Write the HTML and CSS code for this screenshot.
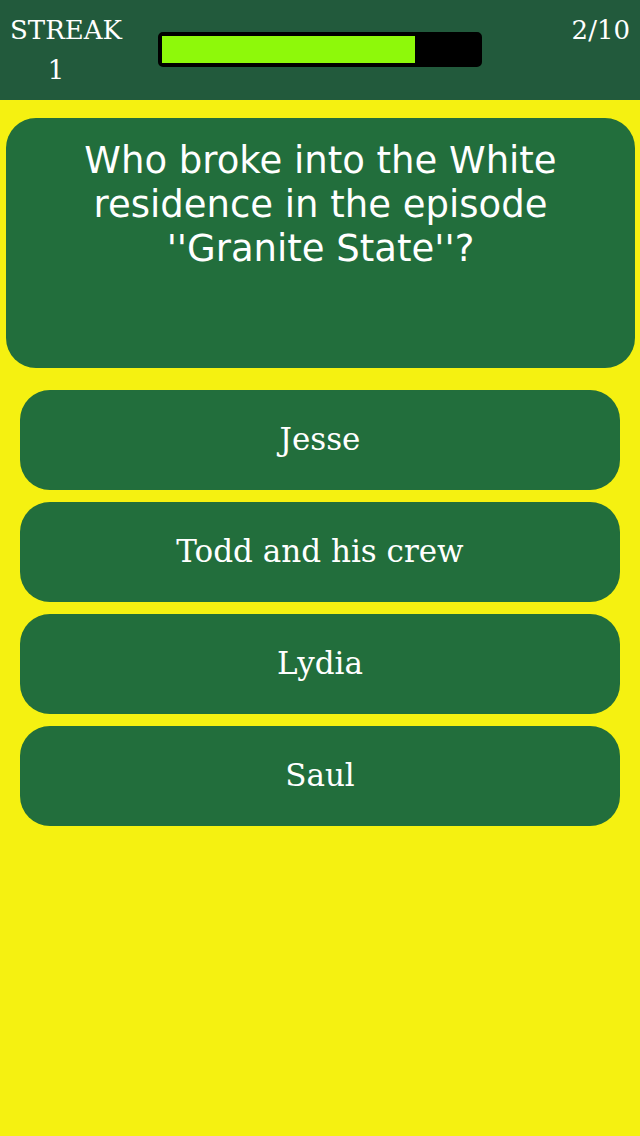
FILE: index.html
```html
<!doctype html>
<html>
  <head>
    <meta charset="utf-8">
    <meta name="viewport" content="width=device-width, initial-scale=1">
    <title>Quiz</title>
    <link rel="stylesheet" href="styles.css">
  </head>
  <body>
    <div class="header">
      <div class="streak">
        <div>STREAK</div>
        <div class="streak-count">1</div>
      </div>
      <div class="progress">
        <div class="progress-fill" style="width: 80%;"></div>
      </div>
      <div class="counter">2/10</div>
    </div>

    <div class="question">
      <p>Who broke into the White residence in the episode ''Granite State''?</p>
    </div>

    <div class="answers">
      <button class="answer">Jesse</button>
      <button class="answer">Todd and his crew</button>
      <button class="answer">Lydia</button>
      <button class="answer">Saul</button>
    </div>
  </body>
</html>
```

FILE: styles.css
```css
body {
  margin: 0;
  background: #f5f111;
  font-family: "DejaVu Serif", serif;
  height: 1136px;
}
.header {
  display: flex;
  align-items: flex-start;
  height: 100px;
  box-sizing: border-box;
  padding: 10px 10px 0 10px;
  background: #225a3c;
  color: #fff;
  font-size: 26px;
  line-height: 40px;
}
.streak {
  width: 112px;
  text-align: center;
}
.streak-count {
  padding-right: 20px;
}
.progress {
  margin: 22px 0 0 36px;
  width: 324px;
  height: 35px;
  box-sizing: border-box;
  border: 4px solid #000;
  border-radius: 5px;
  background: #000;
}
.progress-fill {
  height: 100%;
  background: #8ef90a;
}
.counter {
  margin-left: auto;
}
.question {
  margin: 18px 5px 0 6px;
  height: 250px;
  box-sizing: border-box;
  padding: 21px 20px;
  background: #226e3c;
  border-radius: 30px;
  color: #fff;
  text-align: center;
  font-family: "DejaVu Sans", sans-serif;
  font-size: 37px;
  line-height: 44px;
}
.question p {
  margin: 0;
}
.answers {
  display: flex;
  flex-direction: column;
  gap: 12px;
  margin-top: 22px;
  padding: 0 20px;
}
.answer {
  height: 100px;
  border: none;
  border-radius: 30px;
  background: #226e3c;
  color: #fff;
  font-family: "DejaVu Serif", serif;
  font-size: 31px;
  padding-bottom: 4px;
  cursor: pointer;
}
```
